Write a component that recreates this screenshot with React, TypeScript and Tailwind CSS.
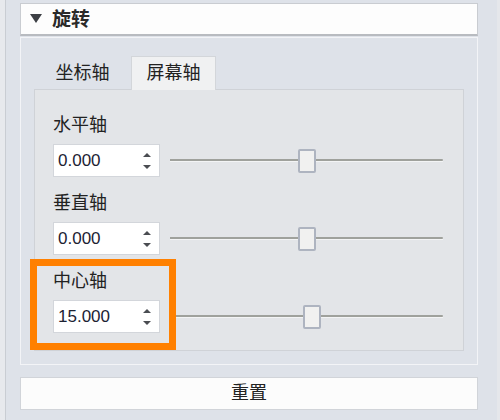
import React from "react";

const font = "font-['Liberation_Sans','Noto_Sans_CJK_SC',sans-serif]";

function SpinBox({ value }: { value: string }) {
  return (
    <div className="w-[107px] h-[33px] bg-white border border-[#d3d6db] flex items-center justify-between pl-[4px] pr-[7px]">
      <span className="text-[17px] text-[#1c2233] leading-none">{value}</span>
      <svg width="10" height="22" viewBox="0 0 10 22">
        <path d="M1 7 L5 3 L9 7 Z" fill="#4a4d52" />
        <path d="M1 15 L5 19 L9 15 Z" fill="#4a4d52" />
      </svg>
    </div>
  );
}

function Slider({ thumb }: { thumb: number }) {
  return (
    <div className="relative flex-1 h-[24px]">
      <div className="absolute left-0 right-0 top-[10px] h-[2px] bg-[#9fa19c] rounded-r" />
      <div className="absolute left-0 right-0 top-[12px] h-[1px] bg-[#f3f4f5]" />
      <div
        className="absolute top-0 w-[18px] h-[24px] bg-[#f1f1f0] border-2 border-[#aeb4c0] rounded-[2px]"
        style={{ left: thumb }}
      />
    </div>
  );
}

function AxisRow({ label, value, thumb }: { label: string; value: string; thumb: number }) {
  return (
    <div className="flex flex-col">
      <div className="text-[18px] leading-[20px] text-[#222] h-[20px]">{label}</div>
      <div className="flex items-center mt-[9px]">
        <SpinBox value={value} />
        <div className="ml-[10px] flex-1">
          <Slider thumb={thumb} />
        </div>
      </div>
    </div>
  );
}

export default function App() {
  const rows = [
    { label: "水平轴", value: "0.000", thumb: 128 },
    { label: "垂直轴", value: "0.000", thumb: 128 },
    { label: "中心轴", value: "15.000", thumb: 133 },
  ];

  return (
    <div className={`w-[500px] h-[420px] bg-[#dee2e9] flex ${font} overflow-hidden`}>
      <div className="w-[6px] h-full bg-[#e7e9ed] border-r border-[#c9cdd3]" />
      <div className="w-[14px]" />
      <div className="w-[458px] flex flex-col pt-[3px]">
        {/* header */}
        <div className="h-[33px] bg-[#fdfdfd] border border-[#c9ccd1] border-b-2 border-b-[#b8bbc0] flex items-center pl-[9px]">
          <svg width="12" height="10" viewBox="0 0 12 10">
            <path d="M0 0 L12 0 L6 9 Z" fill="#3c3f44" />
          </svg>
          <span className="ml-[10px] text-[19px] font-bold text-[#2a2a2a] leading-none">旋转</span>
        </div>

        {/* group box */}
        <div className="relative mt-[1px] h-[328px] border border-[#f3f4f7] pt-[18px] px-[13px]">
          <div className="flex h-[33px] items-end">
            <div className="w-[97px] h-[32px] flex items-center justify-center text-[18px] text-[#222]">坐标轴</div>
            <div className="w-[85px] h-[34px] bg-[#f0f1f2] border border-[#d3d6da] border-b-0 flex items-center justify-center text-[18px] text-[#222] relative z-10 -mb-[1px]">
              屏幕轴
            </div>
          </div>
          <div className="h-[262px] bg-[#e3e5e8] border border-[#cfd2d7] pt-[25px] pl-[18px] pr-[20px] flex flex-col gap-[16px]">
            {rows.map((r, i) => (
              <AxisRow key={i} label={r.label} value={r.value} thumb={r.thumb} />
            ))}
          </div>
          <div className="absolute left-[9px] top-[221px] w-[146px] h-[91px] border-[7px] border-[#ff8000]" />
        </div>

        {/* reset */}
        <div className="mt-[12px] h-[33px] bg-[#fcfcfc] border border-[#d1d4d9] flex items-center justify-center text-[18px] text-[#222]">
          重置
        </div>
      </div>
      <div className="w-[19px]" />
      <div className="w-[3px] h-full bg-[#e5e7eb]" />
    </div>
  );
}
